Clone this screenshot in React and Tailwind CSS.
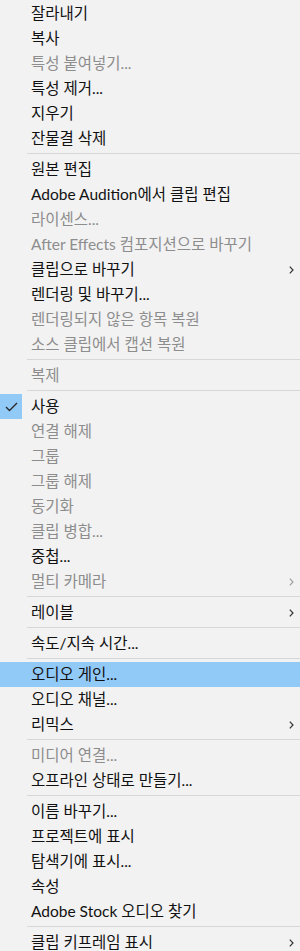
import React from 'react';

const groups = [
    [
        { label: '잘라내기' },
        { label: '복사' },
        { label: '특성 붙여넣기...', disabled: true },
        { label: '특성 제거...' },
        { label: '지우기' },
        { label: '잔물결 삭제' },
    ],
    [
        { label: '원본 편집' },
        { label: 'Adobe Audition에서 클립 편집' },
        { label: '라이센스...', disabled: true },
        { label: 'After Effects 컴포지션으로 바꾸기', disabled: true },
        { label: '클립으로 바꾸기', submenu: true },
        { label: '렌더링 및 바꾸기...' },
        { label: '렌더링되지 않은 항목 복원', disabled: true },
        { label: '소스 클립에서 캡션 복원', disabled: true },
    ],
    [{ label: '복제', disabled: true }],
    [
        { label: '사용', checked: true },
        { label: '연결 해제', disabled: true },
        { label: '그룹', disabled: true },
        { label: '그룹 해제', disabled: true },
        { label: '동기화', disabled: true },
        { label: '클립 병합...', disabled: true },
        { label: '중첩...' },
        { label: '멀티 카메라', disabled: true, submenu: true },
    ],
    [{ label: '레이블', submenu: true }],
    [{ label: '속도/지속 시간...' }],
    [
        { label: '오디오 게인...', active: true },
        { label: '오디오 채널...' },
        { label: '리믹스', submenu: true },
    ],
    [
        { label: '미디어 연결...', disabled: true },
        { label: '오프라인 상태로 만들기...' },
    ],
    [
        { label: '이름 바꾸기...' },
        { label: '프로젝트에 표시' },
        { label: '탐색기에 표시...' },
        { label: '속성' },
        { label: 'Adobe Stock 오디오 찾기' },
    ],
    [{ label: '클립 키프레임 표시', submenu: true }],
];

function MenuItem({ item }) {
    return (
        <div className={`relative flex items-center h-[25px] shrink-0 ${item.active ? 'bg-[#91c9f7]' : ''}`}>
            <div className={`w-[22px] h-full flex items-center justify-center shrink-0 ${item.checked ? 'bg-[#91c9f7]' : ''}`}>
                {item.checked && (
                    <svg width="13" height="10" viewBox="0 0 13 10">
                        <path d="M1 5 L4.5 8.5 L12 1" fill="none" stroke="#2b2b2b" strokeWidth="1.4" />
                    </svg>
                )}
            </div>
            <span className={`pl-[9px] pt-px text-[15.5px] leading-none whitespace-nowrap ${item.disabled ? 'text-[#8d8d8d]' : 'text-[#111]'}`}>
                {item.label}
            </span>
            {item.submenu && (
                <svg className="absolute right-[6px] top-[9px]" width="5" height="8" viewBox="0 0 5 8">
                    <path d="M0.8 0.6 L4 4 L0.8 7.4" fill="none" stroke={item.disabled ? '#a0a0a0' : '#333'} strokeWidth="1.2" />
                </svg>
            )}
        </div>
    );
}

function Separator() {
    return (
        <div className="h-[6px] pt-[2px] pl-[27px] shrink-0">
            <div className="h-px bg-[#d7d7d7]" />
        </div>
    );
}

export default function App() {
    return (
        <div
            className="w-[300px] h-[951px] overflow-hidden bg-[#f2f2f2] pt-px flex flex-col"
            style={{ fontFamily: 'Lato, "Noto Sans CJK KR", sans-serif' }}
        >
            {groups.map((group, gi) => (
                <React.Fragment key={gi}>
                    {gi > 0 && <Separator />}
                    {group.map(item => (
                        <MenuItem key={item.label} item={item} />
                    ))}
                </React.Fragment>
            ))}
        </div>
    );
}
